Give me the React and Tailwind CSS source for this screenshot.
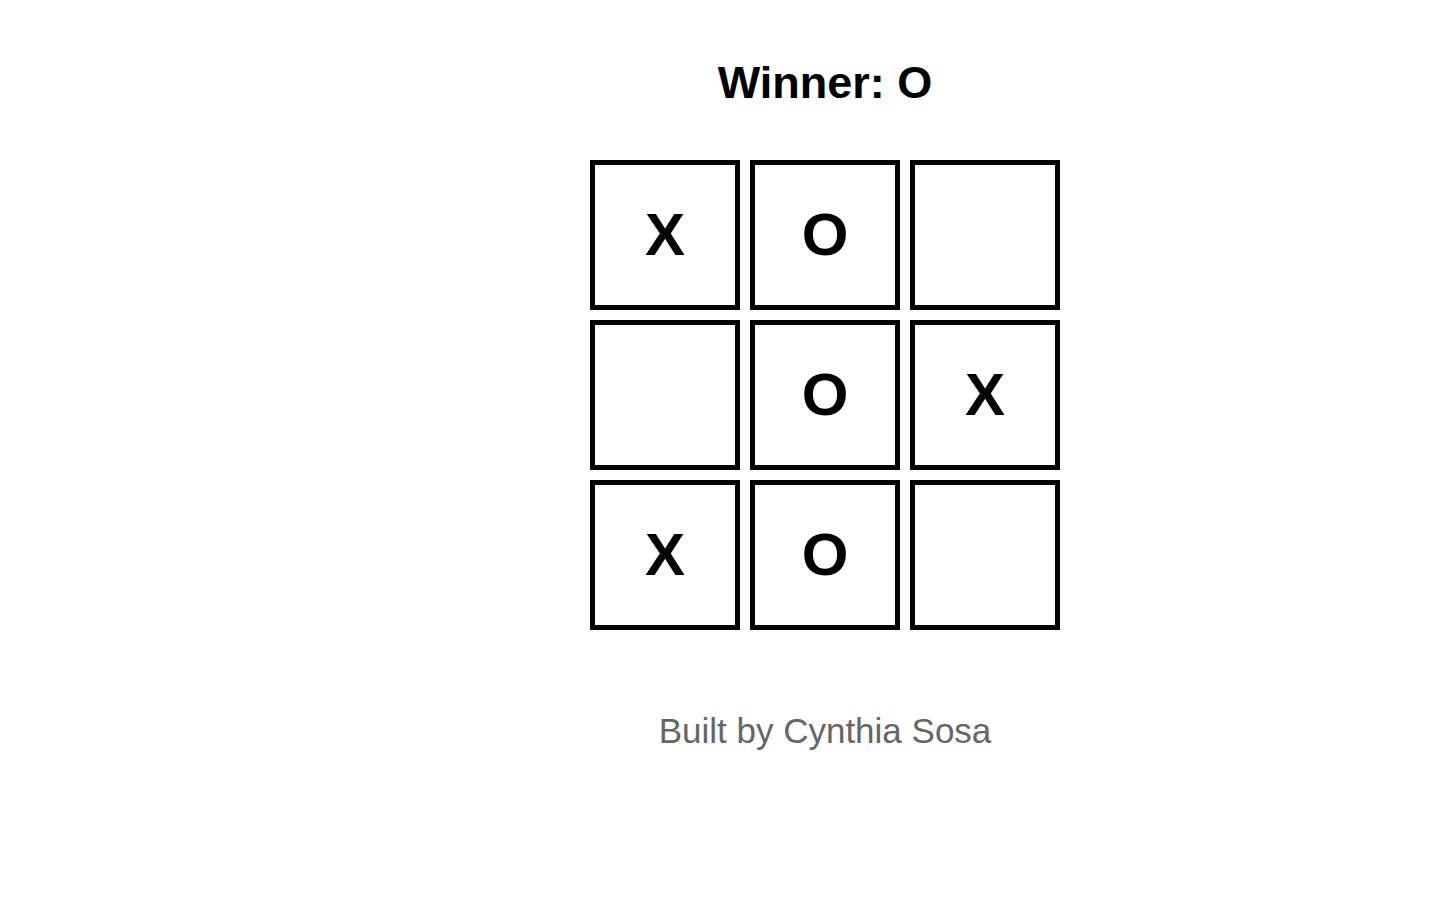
import React from "react";

const board = ["X", "O", "", "", "O", "X", "X", "O", ""];

export default function App() {
  return (
    <div
      className="min-h-screen w-full bg-white flex flex-col items-center pl-[198px] pt-[60px]"
      style={{ fontFamily: '"Liberation Sans", Arial, sans-serif' }}
    >
      <h1 className="text-[45px] leading-none font-bold text-black">Winner: O</h1>
      <div className="mt-[55px] grid grid-cols-[150px_150px_150px] gap-[10px]">
        {board.map((v, i) => (
          <button
            key={i}
            className="w-[150px] h-[150px] border-[5px] border-black bg-white flex items-center justify-center text-[60px] leading-none font-bold text-black"
          >
            {v}
          </button>
        ))}
      </div>
      <p className="mt-[83px] text-[35px] leading-none text-[#666666]">Built by Cynthia Sosa</p>
    </div>
  );
}
